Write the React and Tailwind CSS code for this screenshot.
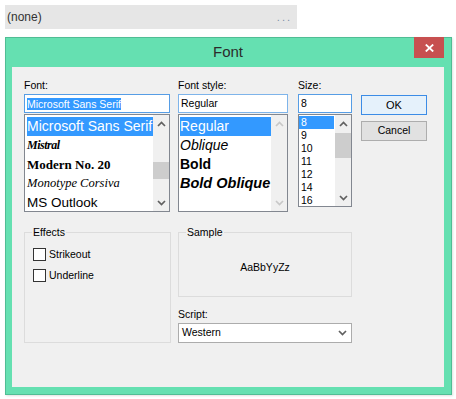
import React from "react";

function Chevron({ dir = "up", color = "#606060" }) {
  return (
    <svg width="9" height="6" viewBox="0 0 9 6">
      {dir === "up" ? (
        <polyline points="1,5 4.5,1.5 8,5" fill="none" stroke={color} strokeWidth="1.7" />
      ) : (
        <polyline points="1,1 4.5,4.5 8,1" fill="none" stroke={color} strokeWidth="1.7" />
      )}
    </svg>
  );
}

function Scrollbar({ thumbClass, disabled }) {
  const c = disabled ? "#c8c8c8" : "#606060";
  return (
    <div className="w-[16px] shrink-0 bg-[#f0f0f0] flex flex-col">
      <div className="h-[17px] flex items-center justify-center">
        <Chevron dir="up" color={c} />
      </div>
      <div className="flex-1">{thumbClass ? <div className={thumbClass} /> : null}</div>
      <div className="h-[17px] flex items-center justify-center">
        <Chevron dir="down" color={c} />
      </div>
    </div>
  );
}

function Label({ children, className = "" }) {
  return <div className={"h-[13px] leading-[13px] text-[10.5px] " + className}>{children}</div>;
}

function Checkbox({ label }) {
  return (
    <div className="flex items-center h-[13px]">
      <div className="w-[13px] h-[13px] border border-[#333333] bg-white shrink-0" />
      <span className="ml-[3px] text-[10.5px] leading-[13px]">{label}</span>
    </div>
  );
}

export default function App() {
  return (
    <div className="w-[456px] h-[399px] bg-white overflow-hidden font-['Liberation_Sans',Arial,sans-serif] text-black">
      {/* property row */}
      <div className="ml-[5px] mt-[5px] w-[292px] h-[24px] bg-[#e6e6e6] flex items-center justify-between pl-[2px] pr-[5px] text-[12px] text-[#333333]">
        <span>(none)</span>
        <span className="text-[#7d8ea6] tracking-[2px] text-[11px] leading-none">...</span>
      </div>

      {/* dialog */}
      <div className="relative ml-[5px] mt-[8px] w-[447px] h-[358px] border border-[#50bd94] bg-[#65e0b1] pl-[6px] pr-[7px] pb-[7px] flex flex-col shadow-[1px_1px_2px_rgba(0,0,0,0.12)]">
        <div className="h-[29px] shrink-0 flex items-center justify-center text-[15px] text-[#2b2b2b]">
          Font
        </div>
        <div className="absolute top-[-1px] right-[7px] w-[30px] h-[21px] bg-[#c75050] flex items-center justify-center">
          <svg width="9" height="8" viewBox="0 0 9 8">
            <line x1="0.8" y1="0.5" x2="8.2" y2="7.5" stroke="white" strokeWidth="1.8" />
            <line x1="8.2" y1="0.5" x2="0.8" y2="7.5" stroke="white" strokeWidth="1.8" />
          </svg>
        </div>

        {/* client area */}
        <div className="flex-1 bg-[#f0f0f0] pl-[12px] pt-[12px] flex flex-col">
          {/* top row */}
          <div className="flex items-start">
            {/* Font */}
            <div className="w-[146px] flex flex-col">
              <Label>Font:</Label>
              <div className="mt-[2px] h-[19px] border border-[#569de5] bg-white flex items-center pl-[2px] overflow-hidden whitespace-nowrap">
                <span className="bg-[#3399ff] text-white text-[10.5px] leading-[12px]">Microsoft Sans Serif</span>
              </div>
              <div className="mt-[1px] h-[98px] border border-[#828790] bg-white flex">
                <div className="flex-1 overflow-hidden pl-[2px] pt-[2px] whitespace-nowrap">
                  <div className="h-[19px] leading-[19px] bg-[#3399ff] text-white text-[14px]">Microsoft Sans Serif</div>
                  <div className="h-[19px] leading-[19px] text-[12px] italic font-bold font-['Liberation_Serif',serif] tracking-[-0.5px]">Mistral</div>
                  <div className="h-[19px] leading-[19px] text-[13px] font-bold font-['Liberation_Serif',serif]">Modern No. 20</div>
                  <div className="h-[19px] leading-[19px] text-[12.5px] italic font-['Liberation_Serif',serif]">Monotype Corsiva</div>
                  <div className="h-[19px] leading-[19px] text-[13.5px]">MS Outlook</div>
                </div>
                <Scrollbar thumbClass="mt-[30px] h-[17px] bg-[#cdcdcd]" />
              </div>
            </div>

            {/* Font style */}
            <div className="ml-[8px] w-[110px] flex flex-col">
              <Label>Font style:</Label>
              <div className="mt-[2px] h-[19px] border border-[#7eb4ea] bg-white flex items-center pl-[2px] overflow-hidden whitespace-nowrap text-[10.5px]">
                Regular
              </div>
              <div className="mt-[1px] h-[98px] border border-[#828790] bg-white flex">
                <div className="flex-1 overflow-hidden pl-[1px] pt-[2px] whitespace-nowrap">
                  <div className="h-[19px] leading-[19px] bg-[#3399ff] text-white text-[14px]">Regular</div>
                  <div className="h-[19px] leading-[19px] text-[14px] italic">Oblique</div>
                  <div className="h-[19px] leading-[19px] text-[14px] font-bold">Bold</div>
                  <div className="h-[19px] leading-[19px] text-[14.5px] font-bold italic">Bold Oblique</div>
                </div>
                <Scrollbar disabled />
              </div>
            </div>

            {/* Size */}
            <div className="ml-[10px] w-[54px] flex flex-col">
              <Label>Size:</Label>
              <div className="mt-[2px] h-[19px] border border-[#569de5] bg-white flex items-center pl-[2px] text-[10.5px]">
                8
              </div>
              <div className="mt-[1px] h-[93px] border border-[#828790] bg-white flex">
                <div className="flex-1 overflow-hidden pt-[1px] whitespace-nowrap text-[10.5px]">
                  <div className="h-[13px] leading-[13px] bg-[#3399ff] text-white pl-[2px] mr-[1px]">8</div>
                  <div className="h-[13px] leading-[13px] pl-[2px]">9</div>
                  <div className="h-[13px] leading-[13px] pl-[2px]">10</div>
                  <div className="h-[13px] leading-[13px] pl-[2px]">11</div>
                  <div className="h-[13px] leading-[13px] pl-[2px]">12</div>
                  <div className="h-[13px] leading-[13px] pl-[2px]">14</div>
                  <div className="h-[13px] leading-[13px] pl-[2px]">16</div>
                </div>
                <Scrollbar thumbClass="mt-[1px] h-[25px] bg-[#cdcdcd]" />
              </div>
            </div>

            {/* Buttons */}
            <div className="ml-[9px] w-[66px] mt-[16px] flex flex-col gap-[6px]">
              <div className="h-[20px] border border-[#3c8ce6] bg-[#e5f1fb] flex items-center justify-center text-[11px]">
                OK
              </div>
              <div className="h-[20px] border border-[#adadad] bg-[#e1e1e1] flex items-center justify-center text-[10.5px]">
                Cancel
              </div>
            </div>
          </div>

          {/* bottom row */}
          <div className="mt-[14px] flex items-start">
            <fieldset className="w-[147px] h-[117px] border border-[#dcdcdc]">
              <legend className="ml-[7px] px-[1px] text-[10.5px] leading-[13px]">Effects</legend>
              <div className="pl-[8px] pt-[9px] flex flex-col gap-[8px]">
                <Checkbox label="Strikeout" />
                <Checkbox label="Underline" />
              </div>
            </fieldset>

            <div className="ml-[7px] w-[174px] flex flex-col">
              <fieldset className="h-[71px] border border-[#dcdcdc]">
                <legend className="ml-[7px] px-[1px] text-[10.5px] leading-[13px]">Sample</legend>
                <div className="h-[57px] flex items-center justify-center text-[10.5px]">AaBbYyZz</div>
              </fieldset>
              <Label className="mt-[11px]">Script:</Label>
              <div className="mt-[2px] h-[20px] border border-[#acacac] bg-white flex items-center justify-between pl-[3px] pr-[4px] text-[10.5px]">
                <span>Western</span>
                <Chevron dir="down" color="#606060" />
              </div>
            </div>
          </div>
        </div>
      </div>
    </div>
  );
}
